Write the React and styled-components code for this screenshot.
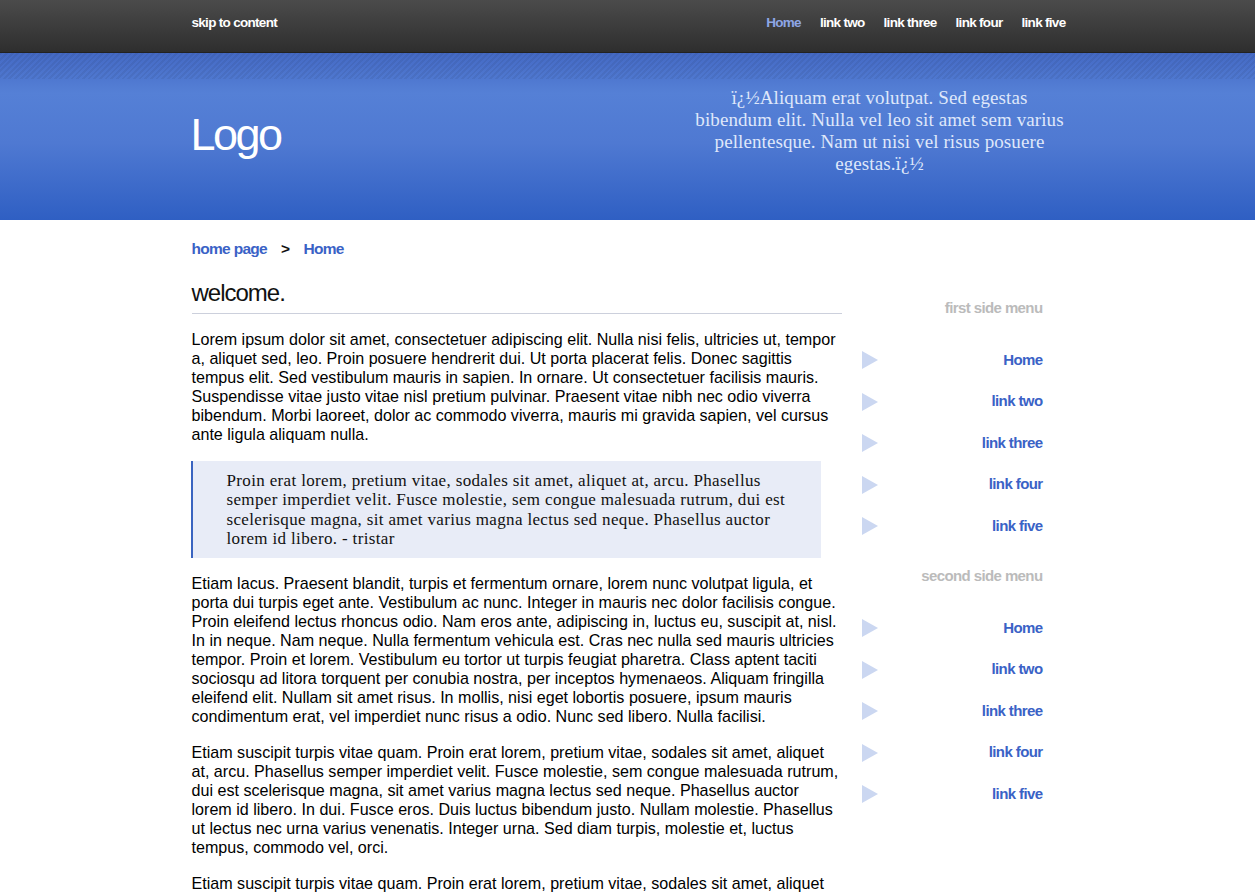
import styled, { createGlobalStyle } from "styled-components";

const GlobalStyle = createGlobalStyle`
  html { overflow: hidden; }
  body {
    margin: 0;
    background: #fff;
    font-family: "Liberation Sans", Arial, sans-serif;
    color: #111;
  }
`;

const Wrap = styled.div`
  width: 872px;
  margin: 0 auto;
`;

const TopBar = styled.div`
  height: 52px;
  background: linear-gradient(#4b4b4b, #2e2e2e);
  border-bottom: 1px solid #222;
`;

const TopInner = styled(Wrap)`
  height: 100%;
  display: flex;
  align-items: center;
  justify-content: space-between;
  padding-bottom: 8px;
  box-sizing: border-box;
`;

const TopLink = styled.a`
  font-size: 13.5px;
  font-weight: bold;
  letter-spacing: -0.7px;
  color: ${(p) => (p.$active ? "#8ea6e6" : "#fff")};
  text-decoration: none;
`;

const Nav = styled.nav`
  display: flex;
  gap: 19px;
  margin-right: -2px;
`;

const Banner = styled.header`
  height: 167px;
  background:
    repeating-linear-gradient(135deg, rgba(0, 0, 0, 0.06) 0 2px, transparent 2px 4px) top / 100% 26px no-repeat,
    linear-gradient(#4469c4 0px, #5580d6 40px, #4f79d2 90px, #2f5fc3 167px);
`;

const BannerInner = styled(Wrap)`
  height: 100%;
  display: flex;
  align-items: center;
  justify-content: space-between;
`;

const Logo = styled.h1`
  margin: -4px 0 0 -1px;
  font-size: 45px;
  font-weight: normal;
  letter-spacing: -2.5px;
  color: #fff;
`;

const Tagline = styled.p`
  margin: 0 -2px 12px 0;
  width: 372px;
  text-align: center;
  font-family: "Liberation Serif", Georgia, serif;
  font-size: 19px;
  letter-spacing: 0.1px;
  line-height: 22px;
  color: #dfe7fa;
`;

const Body = styled(Wrap)`
  display: flex;
  padding-top: 20px;
`;

const Main = styled.main`
  width: 650px;
  flex: none;
`;

const Crumbs = styled.div`
  display: flex;
  gap: 14px;
  font-size: 15.5px;
  font-weight: bold;
  letter-spacing: -0.7px;
  line-height: 18px;
`;

const Crumb = styled.a`
  color: ${(p) => (p.$plain ? "#111" : "#3a62c6")};
  text-decoration: none;
`;

const Heading = styled.h2`
  margin: 20px 0 0;
  padding-bottom: 5px;
  border-bottom: 1px solid #ccd0dc;
  font-size: 24px;
  font-weight: normal;
  letter-spacing: -1px;
  line-height: 30px;
  color: #111;
`;

const Para = styled.p`
  margin: 16px 0 17px;
  font-size: 16.1px;
  line-height: 19px;
  color: #000;
`;

const Quote = styled.blockquote`
  margin: 0 21px 0 -1px;
  padding: 10px 30px 10px 34px;
  background: #e8ecf7;
  border-left: 2px solid #3a64c0;
  font-family: "Liberation Serif", Georgia, serif;
  font-size: 17px;
  letter-spacing: 0.35px;
  line-height: 19.3px;
  color: #111;
`;

const Side = styled.aside`
  width: 181px;
  margin-left: 20px;
  padding-top: 59px;
`;

const SideTitle = styled.h3`
  margin: 0 0 33px;
  text-align: right;
  font-size: 15px;
  font-weight: bold;
  letter-spacing: -0.6px;
  line-height: 18px;
  color: #bbb;
`;

const SideList = styled.ul`
  list-style: none;
  margin: 0 0 33px;
  padding: 0;
  display: flex;
  flex-direction: column;
  gap: 23.5px;
`;

const SideItem = styled.li`
  display: flex;
  align-items: center;
  justify-content: space-between;
  height: 18px;
`;

const Arrow = styled.span`
  width: 0;
  height: 0;
  margin-top: 2px;
  border-top: 9px solid transparent;
  border-bottom: 9px solid transparent;
  border-left: 16px solid #cbd7f1;
`;

const SideLink = styled.a`
  font-size: 15px;
  font-weight: bold;
  letter-spacing: -0.6px;
  color: #3a62c6;
  text-decoration: none;
`;

const links = ["Home", "link two", "link three", "link four", "link five"];

const p1 =
  "Lorem ipsum dolor sit amet, consectetuer adipiscing elit. Nulla nisi felis, ultricies ut, tempor a, aliquet sed, leo. Proin posuere hendrerit dui. Ut porta placerat felis. Donec sagittis tempus elit. Sed vestibulum mauris in sapien. In ornare. Ut consectetuer facilisis mauris. Suspendisse vitae justo vitae nisl pretium pulvinar. Praesent vitae nibh nec odio viverra bibendum. Morbi laoreet, dolor ac commodo viverra, mauris mi gravida sapien, vel cursus ante ligula aliquam nulla.";
const p2 =
  "Etiam lacus. Praesent blandit, turpis et fermentum ornare, lorem nunc volutpat ligula, et porta dui turpis eget ante. Vestibulum ac nunc. Integer in mauris nec dolor facilisis congue. Proin eleifend lectus rhoncus odio. Nam eros ante, adipiscing in, luctus eu, suscipit at, nisl. In in neque. Nam neque. Nulla fermentum vehicula est. Cras nec nulla sed mauris ultricies tempor. Proin et lorem. Vestibulum eu tortor ut turpis feugiat pharetra. Class aptent taciti sociosqu ad litora torquent per conubia nostra, per inceptos hymenaeos. Aliquam fringilla eleifend elit. Nullam sit amet risus. In mollis, nisi eget lobortis posuere, ipsum mauris condimentum erat, vel imperdiet nunc risus a odio. Nunc sed libero. Nulla facilisi.";
const p3 =
  "Etiam suscipit turpis vitae quam. Proin erat lorem, pretium vitae, sodales sit amet, aliquet at, arcu. Phasellus semper imperdiet velit. Fusce molestie, sem congue malesuada rutrum, dui est scelerisque magna, sit amet varius magna lectus sed neque. Phasellus auctor lorem id libero. In dui. Fusce eros. Duis luctus bibendum justo. Nullam molestie. Phasellus ut lectus nec urna varius venenatis. Integer urna. Sed diam turpis, molestie et, luctus tempus, commodo vel, orci.";

function SideMenu({ title }) {
  return (
    <>
      <SideTitle>{title}</SideTitle>
      <SideList>
        {links.map((l) => (
          <SideItem key={l}>
            <Arrow />
            <SideLink href="#">{l}</SideLink>
          </SideItem>
        ))}
      </SideList>
    </>
  );
}

export default function App() {
  return (
    <>
      <GlobalStyle />
      <TopBar>
        <TopInner>
          <TopLink href="#">skip to content</TopLink>
          <Nav>
            {links.map((l, i) => (
              <TopLink key={l} href="#" $active={i === 0}>
                {l}
              </TopLink>
            ))}
          </Nav>
        </TopInner>
      </TopBar>
      <Banner>
        <BannerInner>
          <Logo>Logo</Logo>
          <Tagline>
            ï¿½Aliquam erat volutpat. Sed egestas bibendum elit. Nulla vel leo sit amet sem varius
            pellentesque. Nam ut nisi vel risus posuere egestas.ï¿½
          </Tagline>
        </BannerInner>
      </Banner>
      <Body>
        <Main>
          <Crumbs>
            <Crumb href="#">home page</Crumb>
            <Crumb as="span" $plain>&gt;</Crumb>
            <Crumb href="#">Home</Crumb>
          </Crumbs>
          <Heading>welcome.</Heading>
          <Para>{p1}</Para>
          <Quote>
            Proin erat lorem, pretium vitae, sodales sit amet, aliquet at, arcu. Phasellus semper
            imperdiet velit. Fusce molestie, sem congue malesuada rutrum, dui est scelerisque magna,
            sit amet varius magna lectus sed neque. Phasellus auctor lorem id libero. - tristar
          </Quote>
          <Para>{p2}</Para>
          <Para>{p3}</Para>
          <Para>{p3}</Para>
        </Main>
        <Side>
          <SideMenu title="first side menu" />
          <SideMenu title="second side menu" />
        </Side>
      </Body>
    </>
  );
}
